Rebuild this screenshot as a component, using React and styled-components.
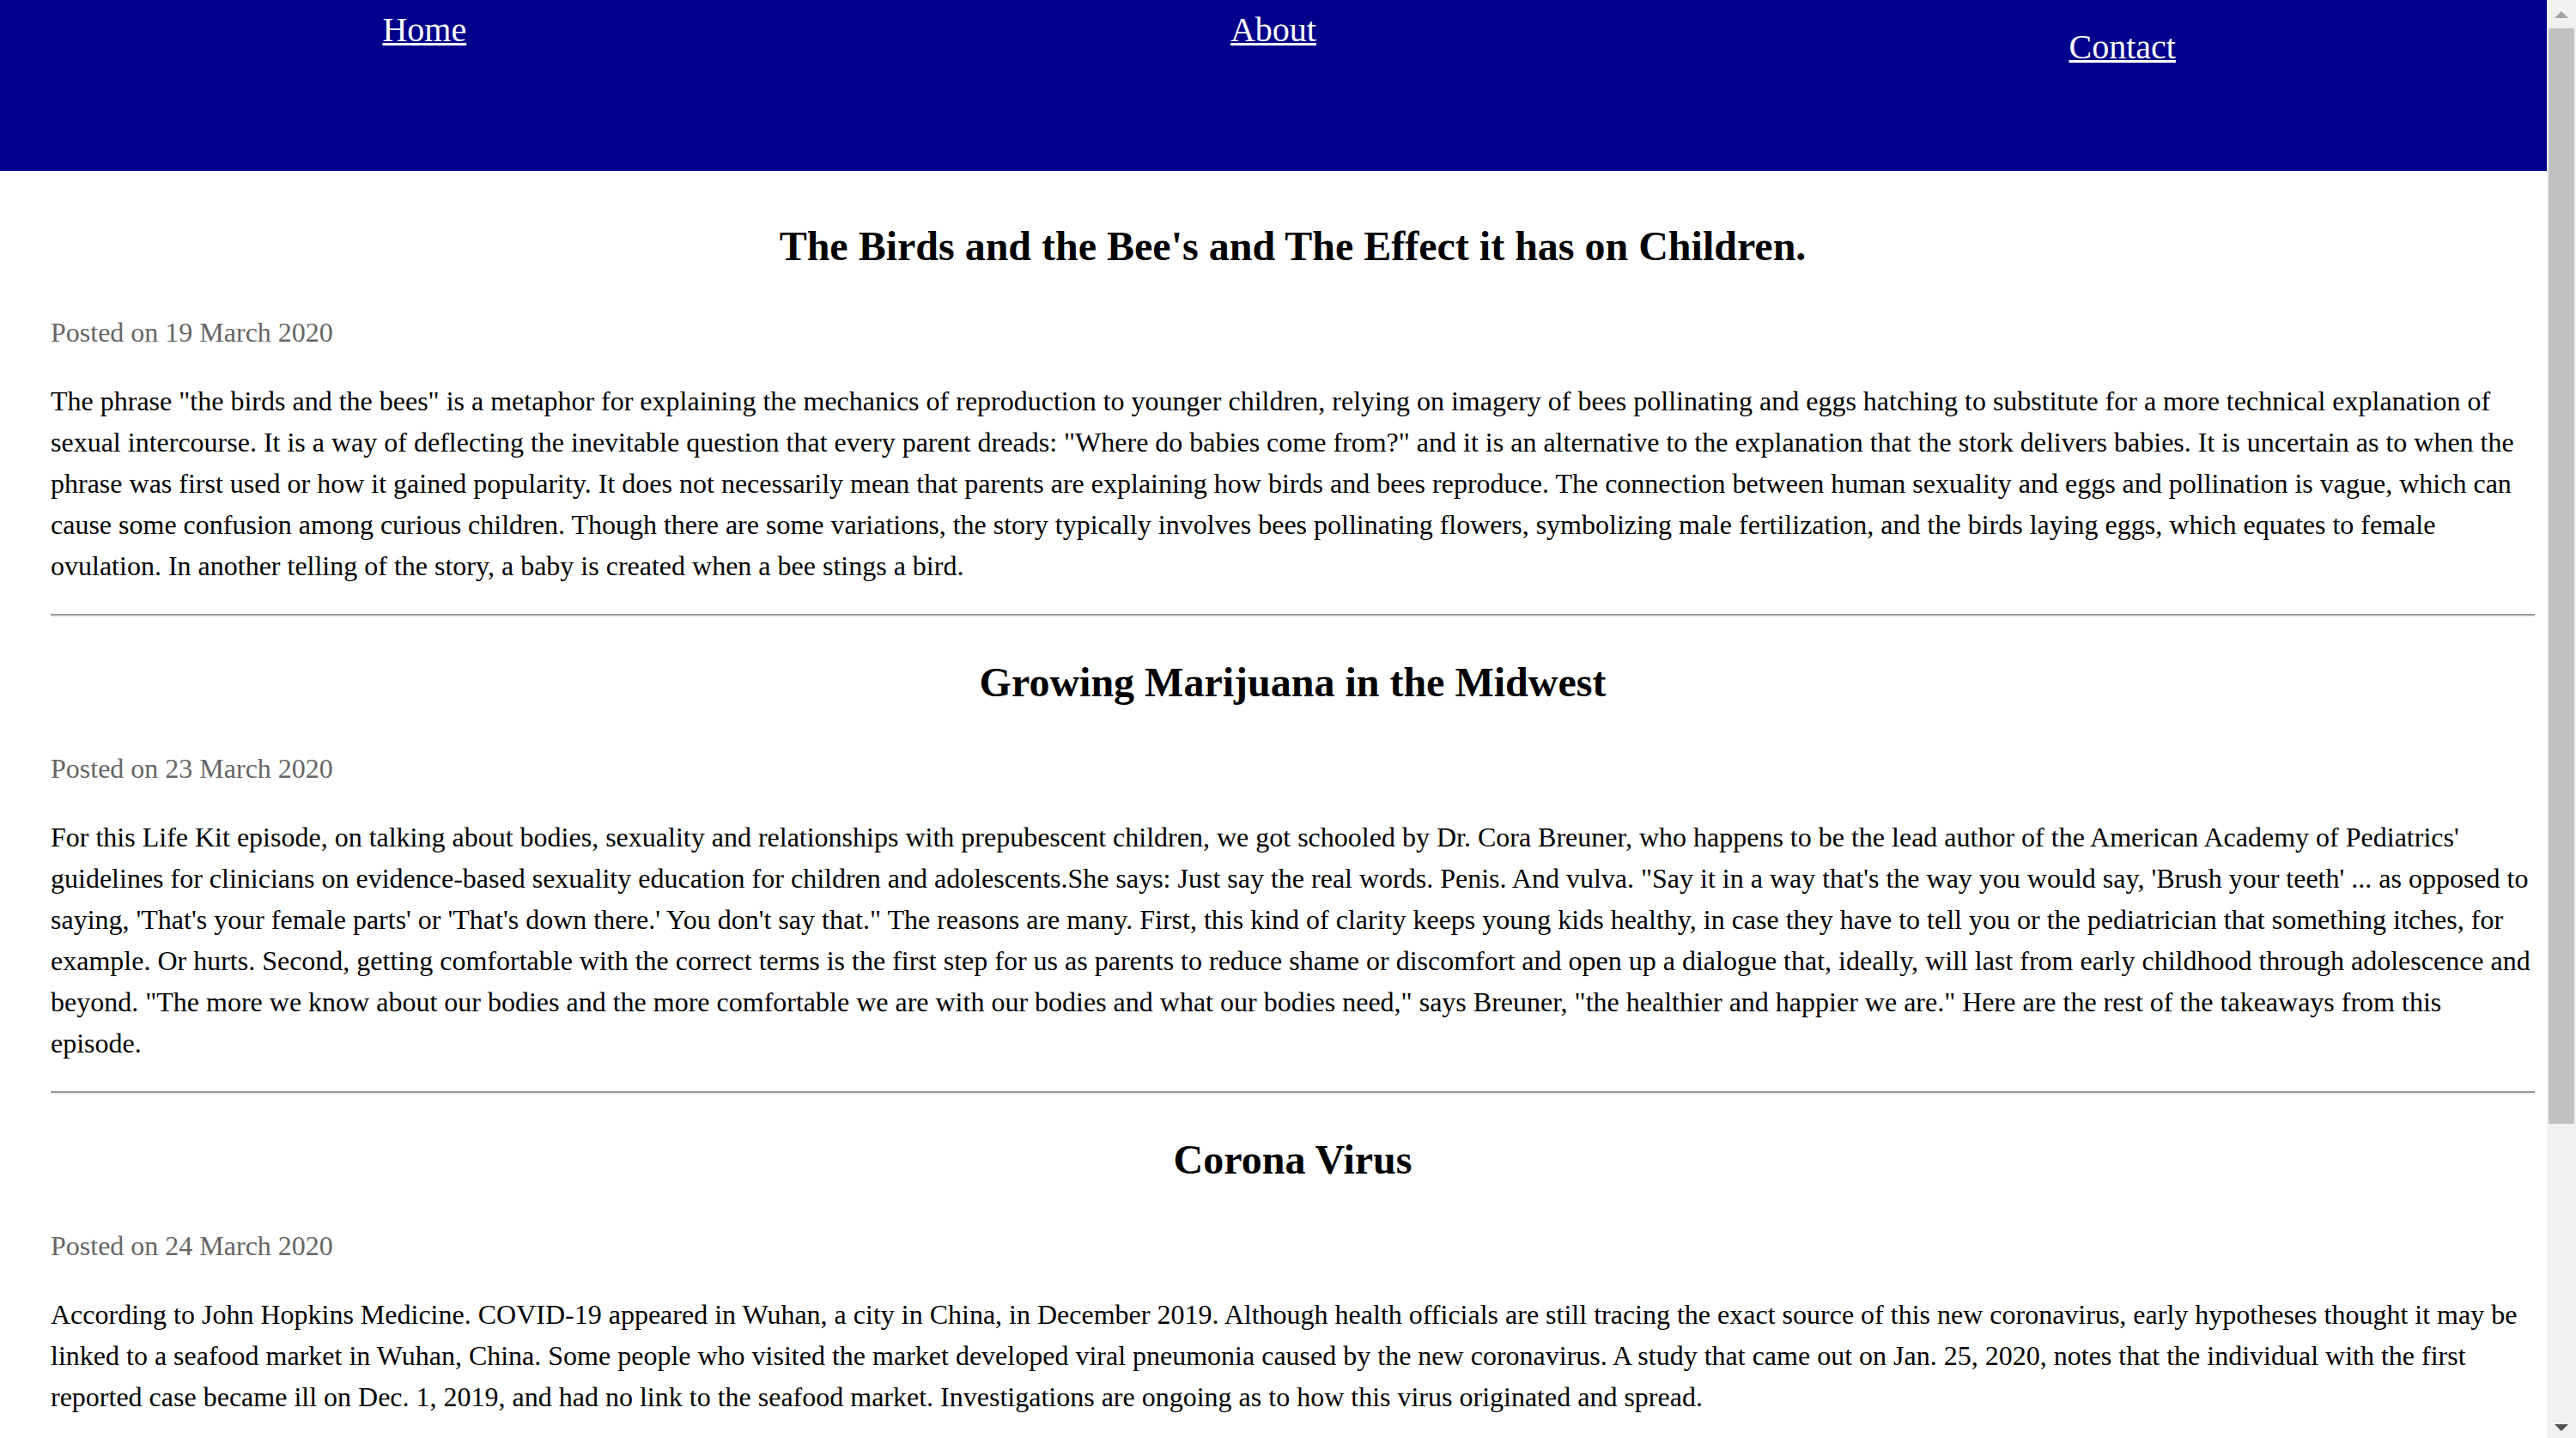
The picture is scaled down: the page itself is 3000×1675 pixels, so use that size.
import React from "react";
import styled, { createGlobalStyle } from "styled-components";

const GlobalStyle = createGlobalStyle`
  html, body {
    margin: 0;
    padding: 0;
    overflow: hidden;
    background: #fff;
  }
`;

const Page = styled.div`
  display: flex;
  height: 100vh;
  font-family: "Liberation Serif", "Times New Roman", serif;
  font-size: 32px;
  line-height: 1.5;
  color: #000;
`;

const Viewport = styled.div`
  flex: 1;
  min-width: 0;
  overflow-y: auto;
  scrollbar-width: none;
`;

/* the window's scroll bar, drawn as in the screenshot */
const ScrollBar = styled.div`
  width: 34px;
  flex-shrink: 0;
  display: flex;
  flex-direction: column;
  background: #f1f1f1;
`;

const ScrollButton = styled.div`
  height: 33px;
  flex-shrink: 0;
  display: flex;
  justify-content: center;
  align-items: flex-start;
  padding-top: ${(p) => (p.$down ? "17px" : "13px")};
  box-sizing: border-box;
`;

const Arrow = styled.span`
  width: 0;
  height: 0;
  border-left: 8px solid transparent;
  border-right: 8px solid transparent;
  ${(p) =>
    p.$down
      ? "border-top: 8px solid #505050;"
      : "border-bottom: 8px solid #a3a3a3;"}
`;

const Thumb = styled.div`
  height: 1276px;
  margin: 0 2px;
  background: #c1c1c1;
  flex-shrink: 0;
`;

const Track = styled.div`
  flex: 1;
`;

const Header = styled.header`
  height: 199px;
  background: #00008b;
`;

const NavList = styled.ul`
  display: grid;
  grid-template-columns: 1fr 1fr 1fr;
  list-style: none;
  margin: 0;
  padding: 5px 0 0;
`;

const NavItem = styled.li`
  text-align: center;
  font-size: 40px;
  line-height: 1.5;
  margin-top: ${(p) => (p.$drop ? "20px" : "0")};
`;

const NavLink = styled.a`
  color: #fff;
  text-decoration: underline;
  text-decoration-thickness: 3px;
`;

const Main = styled.main`
  padding: 12px 14px 426px 59px;
`;

const Post = styled.article``;

const Title = styled.h2`
  font-size: 48px;
  font-weight: bold;
  line-height: 72px;
  text-align: center;
  margin: 40px 0;
`;

const Meta = styled.p`
  color: #666;
  margin: 32px 0;
`;

const Body = styled.p`
  margin: 32px 0;
`;

const Divider = styled.hr`
  height: 0;
  border: none;
  border-top: 2px solid #9a9a9a;
  border-bottom: 2px solid #eee;
  margin: 16px 0;
`;

const posts = [
  {
    title: "The Birds and the Bee's and The Effect it has on Children.",
    date: "19 March 2020",
    body: `The phrase "the birds and the bees" is a metaphor for explaining the mechanics of reproduction to younger children, relying on imagery of bees pollinating and eggs hatching to substitute for a more technical explanation of sexual intercourse. It is a way of deflecting the inevitable question that every parent dreads: "Where do babies come from?" and it is an alternative to the explanation that the stork delivers babies. It is uncertain as to when the phrase was first used or how it gained popularity. It does not necessarily mean that parents are explaining how birds and bees reproduce. The connection between human sexuality and eggs and pollination is vague, which can cause some confusion among curious children. Though there are some variations, the story typically involves bees pollinating flowers, symbolizing male fertilization, and the birds laying eggs, which equates to female ovulation. In another telling of the story, a baby is created when a bee stings a bird.`,
  },
  {
    title: "Growing Marijuana in the Midwest",
    date: "23 March 2020",
    body: `For this Life Kit episode, on talking about bodies, sexuality and relationships with prepubescent children, we got schooled by Dr. Cora Breuner, who happens to be the lead author of the American Academy of Pediatrics' guidelines for clinicians on evidence-based sexuality education for children and adolescents.She says: Just say the real words. Penis. And vulva. "Say it in a way that's the way you would say, 'Brush your teeth' ... as opposed to saying, 'That's your female parts' or 'That's down there.' You don't say that." The reasons are many. First, this kind of clarity keeps young kids healthy, in case they have to tell you or the pediatrician that something itches, for example. Or hurts. Second, getting comfortable with the correct terms is the first step for us as parents to reduce shame or discomfort and open up a dialogue that, ideally, will last from early childhood through adolescence and beyond. "The more we know about our bodies and the more comfortable we are with our bodies and what our bodies need," says Breuner, "the healthier and happier we are." Here are the rest of the takeaways from this episode.`,
  },
  {
    title: "Corona Virus",
    date: "24 March 2020",
    body: `According to John Hopkins Medicine. COVID-19 appeared in Wuhan, a city in China, in December 2019. Although health officials are still tracing the exact source of this new coronavirus, early hypotheses thought it may be linked to a seafood market in Wuhan, China. Some people who visited the market developed viral pneumonia caused by the new coronavirus. A study that came out on Jan. 25, 2020, notes that the individual with the first reported case became ill on Dec. 1, 2019, and had no link to the seafood market. Investigations are ongoing as to how this virus originated and spread.`,
  },
];

export default function App() {
  return (
    <>
      <GlobalStyle />
      <Page>
        <Viewport>
          <Header>
            <nav>
              <NavList>
                <NavItem>
                  <NavLink href="#">Home</NavLink>
                </NavItem>
                <NavItem>
                  <NavLink href="#">About</NavLink>
                </NavItem>
                <NavItem $drop>
                  <NavLink href="#">Contact</NavLink>
                </NavItem>
              </NavList>
            </nav>
          </Header>
          <Main>
            {posts.map((post, i) => (
              <React.Fragment key={post.title}>
                {i > 0 && <Divider />}
                <Post>
                  <Title>{post.title}</Title>
                  <Meta>Posted on {post.date}</Meta>
                  <Body>{post.body}</Body>
                </Post>
              </React.Fragment>
            ))}
          </Main>
        </Viewport>
        <ScrollBar>
          <ScrollButton>
            <Arrow />
          </ScrollButton>
          <Thumb />
          <Track />
          <ScrollButton $down>
            <Arrow $down />
          </ScrollButton>
        </ScrollBar>
      </Page>
    </>
  );
}
